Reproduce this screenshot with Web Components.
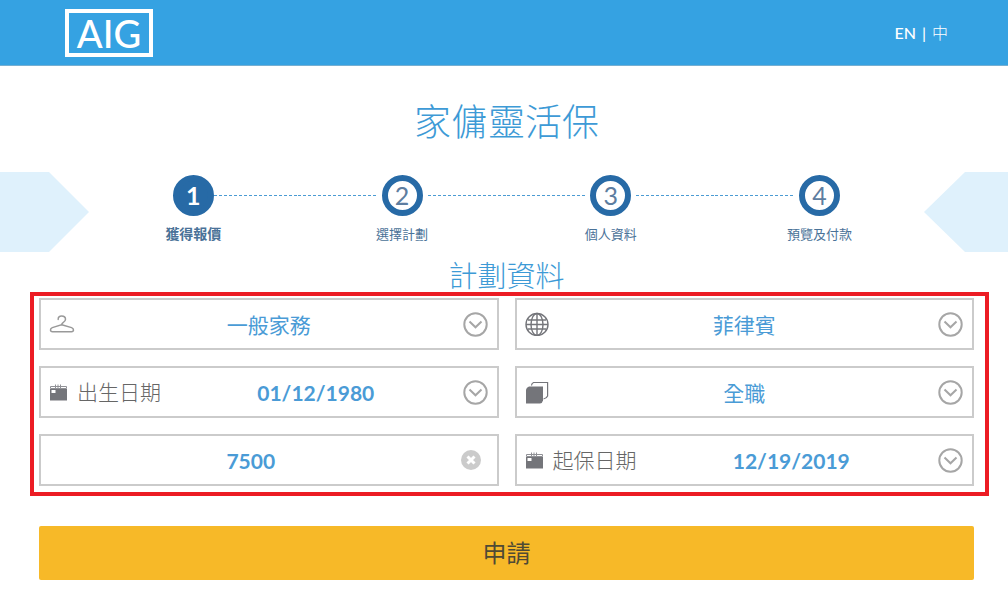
<!DOCTYPE html>
<html lang="zh-Hant">
<head>
<meta charset="utf-8">
<meta name="viewport" content="width=device-width, initial-scale=1">
<title>家傭靈活保</title>
<style>
body { margin: 0; background: #fff; font-family: Lato, "Noto Sans CJK TC", sans-serif; font-weight: 300; color: #3d9ad6; }
</style>
</head>
<body>
<quote-page></quote-page>
<script>
const define = (name, html, setup) => customElements.define(name, class extends HTMLElement {
  connectedCallback() {
    if (this.shadowRoot) return;
    const template = document.createElement('template');
    template.innerHTML = html;
    this.attachShadow({ mode: 'open' }).append(template.content.cloneNode(true));
    if (setup) setup(this, this.shadowRoot);
  }
});

const ICONS = {
  hanger: '<svg width="26" height="24" viewBox="0 0 26 24" fill="none" stroke="#999" stroke-width="1.5" stroke-linecap="round"><path d="M9.2 7.400C9 5.200 10.500 4 12.600 4c2.200 0 3.900 1.400 3.900 3.300 0 1.700-1.100 2.600-2.400 3.400-1 .6-1.400 1.100-1.400 2L3.300 15.600C.8 16.500.9 19.700 3.500 19.700h19c2.600 0 2.600-3.200.1-4.100L12.700 12.700"/></svg>',
  globe: '<svg width="26" height="24" viewBox="0 0 26 24" fill="none" stroke="#74757a" stroke-width="1.400"><circle cx="12" cy="12.500" r="11"/><ellipse cx="12" cy="12.500" rx="6" ry="11"/><path d="M12 1.500v22M1 12.500h22M3 8h18M3 17h18"/></svg>',
  cards: '<svg width="26" height="24" viewBox="0 0 26 24"><path d="M6.500 5.500Q6.500 3.500 8.500 2.500H22.600V16Q21.500 18.500 18.500 19" fill="none" stroke="#74757a" stroke-width="1.200"/><path d="M4 6.500H18V20.500Q17.500 23 15 23.500H1V9.500Q1.500 7.500 4 6.500Z" fill="#74757a"/></svg>',
  calendar: '<svg width="20" height="24" viewBox="0 0 20 24"><path d="M1.500 6.500h16v2h-16z" fill="none" stroke="#909196"/><path d="M1 9h17v11.500H1z" fill="#74757a"/><path d="M6.500 4.500v3.500M9 4.500v3.500M11.500 4.500v3.500" stroke="#909196"/><path d="M2.500 10h4v3h-4z" fill="#fff"/></svg>'
};

define('site-logo', `
<style>
:host { display: block; }
a { display: flex; box-sizing: border-box; width: 88px; height: 48px; align-items: center; justify-content: center; border: 4px solid #fff; color: #fff; font-size: 38px; line-height: 40px; font-weight: 500; text-decoration: none; }
</style>
<a href="#"><slot></slot></a>`);

define('site-header', `
<style>
:host { display: block; }
header { display: flex; align-items: center; justify-content: space-between; height: 65px; padding: 0 60px 0 65px; background: #35a2e2; border-bottom: 1px solid #75afd2; }
nav { display: flex; gap: 6px; font-size: 16px; line-height: 24px; color: #fff; }
a { color: inherit; text-decoration: none; }
.en, .bar { font-weight: 500; }
</style>
<header>
  <site-logo>AIG</site-logo>
  <nav><a class="en" href="#en">EN</a><span class="bar">|</span><a href="#zh">中</a></nav>
</header>`);

define('progress-step', `
<style>
:host { display: block; text-align: center; color: #4a7298; }
.track { display: grid; grid-template-columns: 1fr 41px 1fr; align-items: center; }
.line { height: 1px; background: repeating-linear-gradient(90deg, #4b9bd3 0 3px, transparent 3px 5px); }
.before { margin-right: 5px; }
.after { margin-left: 5px; }
:host([first]) .before, :host([last]) .after { visibility: hidden; }
:host([first]) .after { margin-left: 0; }
.disc { box-sizing: border-box; height: 41px; border: 6px solid #276aa6; border-radius: 50%; font-size: 25px; line-height: 29px; font-weight: 400; color: #5d7da0; }
:host([active]) .disc { background: #276aa6; color: #fff; font-weight: 700; }
.label { margin-top: 8px; font-size: 13px; line-height: 20px; font-weight: 400; }
:host([active]) .label { font-size: 14px; font-weight: 700; }
</style>
<div class="track"><span class="line before"></span><span class="disc"></span><span class="line after"></span></div>
<div class="label"><slot></slot></div>`,
(host, root) => { root.querySelector('.disc').textContent = host.getAttribute('number'); });

define('progress-band', `
<style>
:host { display: flex; height: 80px; }
.arrow { background: #dff1fc; }
.left { width: 89px; clip-path: polygon(0 0, 49px 0, 100% 50%, 49px 100%, 0 100%); }
.right { width: 84px; clip-path: polygon(41px 0, 100% 0, 100% 100%, 41px 100%, 0 50%); }
.steps { flex: 1; display: grid; grid-template-columns: repeat(4, 1fr); padding-top: 3px; }
</style>
<div class="arrow left"></div><div class="steps"><slot></slot></div><div class="arrow right"></div>`);

define('field-icon', `
<style>:host { display: block; } svg { display: block; }</style>`,
(host, root) => { root.innerHTML += ICONS[host.getAttribute('name')]; });

define('chevron-mark', `
<style>:host { display: block; pointer-events: none; } svg { display: block; }</style>
<svg width="25" height="25" viewBox="0 0 25 25" fill="none" stroke="#a6a6a6" stroke-width="2"><circle cx="12.500" cy="12.500" r="11.200"/><path d="M6.500 9.500l6 5.800 6-5.800"/></svg>`);

const FIELD = `
:host { display: flex; box-sizing: border-box; align-items: center; height: 52px; padding: 0 9px 0 8px; border: 2px solid #cbcbcb; background: #fff; min-width: 0; }
input, select { flex: 1; min-width: 0; width: 0; height: 44px; box-sizing: border-box; margin: 0; padding: 0; border: 0; outline: 0; background: none; appearance: none; font: inherit; font-size: 21px; color: #4a9bd6; text-align: center; text-align-last: center; }
input { font-weight: 700; }
button { margin: 0; padding: 0; border: 0; background: none; display: block; }
`;

define('select-field', `
<style>${FIELD} select { font-weight: 400; }</style>
<field-icon></field-icon><select><option></option></select><chevron-mark></chevron-mark>`,
(host, root) => {
  root.querySelector('select').setAttribute('aria-label', host.getAttribute('label'));
  root.querySelector('option').textContent = host.getAttribute('value');
  const icon = document.createElement('field-icon');
  icon.setAttribute('name', host.getAttribute('icon'));
  root.querySelector('field-icon').replaceWith(icon);
});

define('date-field', `
<style>${FIELD}
label { margin-left: 8px; font-size: 21px; line-height: 32px; font-weight: 300; color: #666; }
input { padding-left: 8px; }
</style>
<field-icon name="calendar"></field-icon><label for="date"><slot></slot></label><input id="date" type="text"><button type="button" aria-label="選擇日期"><chevron-mark></chevron-mark></button>`,
(host, root) => { root.querySelector('input').value = host.getAttribute('value'); });

define('amount-field', `
<style>${FIELD} :host { padding: 0 16px 0 0; }</style>
<input type="text" inputmode="numeric"><button type="button" aria-label="清除"><svg width="20" height="20" viewBox="0 0 20 20" style="display:block"><circle cx="10" cy="10" r="10" fill="#cbcbcb"/><path d="M6.500 6.500l7 7m0-7l-7 7" stroke="#fff" stroke-width="3"/></svg></button>`,
(host, root) => {
  const input = root.querySelector('input');
  input.value = host.getAttribute('value');
  input.setAttribute('aria-label', host.getAttribute('label'));
});

define('field-frame', `
<style>
:host { display: grid; grid-template-columns: 1fr 1fr; gap: 16px; padding: 2px 11px 6px 5px; border: 4px solid #ec1c24; }
</style><slot></slot>`);

define('submit-button', `
<style>
:host { display: block; }
button { display: block; width: 100%; height: 54px; margin: 0; padding: 0; border: 0; border-radius: 2px; background: #f7b928; color: #4f4a35; font: inherit; font-size: 24px; line-height: 36px; font-weight: 400; }
</style>
<button type="button"><slot></slot></button>`);

define('quote-page', `
<style>
:host { display: block; }
h1, h2 { margin: 0 34px 0 39px; font-weight: 300; text-align: center; color: #3d9ad6; }
h1 { padding: 28px 0 22px; font-size: 37px; line-height: 56px; }
h2 { padding-top: 8px; font-size: 29px; line-height: 32px; }
field-frame { margin: 0 19px 0 30px; }
submit-button { margin: 30px 34px 0 39px; }
</style>
<site-header></site-header>
<main>
  <h1>家傭靈活保</h1>
  <progress-band>
    <progress-step number="1" first active>獲得報價</progress-step>
    <progress-step number="2">選擇計劃</progress-step>
    <progress-step number="3">個人資料</progress-step>
    <progress-step number="4" last>預覽及付款</progress-step>
  </progress-band>
  <h2>計劃資料</h2>
  <field-frame>
    <select-field icon="hanger" label="工作類別" value="一般家務"></select-field>
    <select-field icon="globe" label="國籍" value="菲律賓"></select-field>
    <date-field value="01/12/1980">出生日期</date-field>
    <select-field icon="cards" label="受僱形式" value="全職"></select-field>
    <amount-field label="金額" value="7500"></amount-field>
    <date-field value="12/19/2019">起保日期</date-field>
  </field-frame>
  <submit-button>申請</submit-button>
</main>`);
</script>
</body>
</html>
